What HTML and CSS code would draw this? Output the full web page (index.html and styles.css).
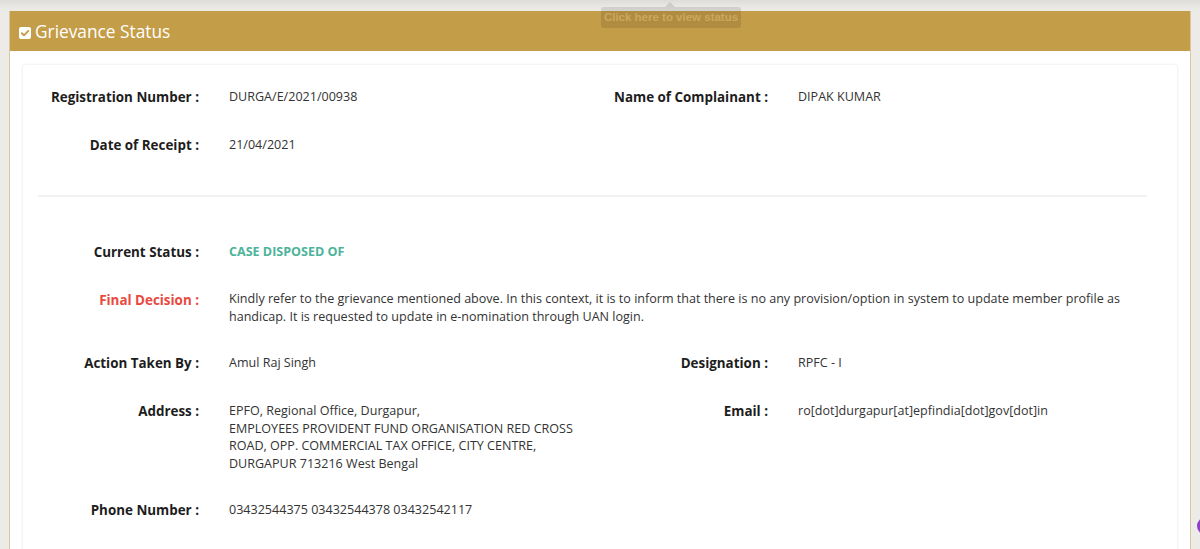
FILE: index.html
```html
<!DOCTYPE html>
<html lang="en">
<head>
<meta charset="utf-8">
<title>Grievance Status</title>
<link rel="stylesheet" href="styles.css">
</head>
<body>
<div class="panel">
  <div class="panel-head">
    <svg class="chk" width="12" height="12" viewBox="0 0 12 12"><rect x="0" y="0" width="12" height="12" rx="2" fill="#fff"/><path d="M2.8 6.2 L5 8.3 L9.3 3.9" fill="none" stroke="#c49d48" stroke-width="1.9" stroke-linecap="round" stroke-linejoin="round"/></svg>
    <span class="title">Grievance Status</span>
  </div>
  <div class="panel-body">
    <div class="card">
      <div class="section">
        <div class="row">
          <div class="lbl">Registration Number :</div>
          <div class="val">DURGA/E/2021/00938</div>
          <div class="lbl">Name of Complainant :</div>
          <div class="val">DIPAK KUMAR</div>
        </div>
        <div class="row">
          <div class="lbl">Date of Receipt :</div>
          <div class="val">21/04/2021</div>
        </div>
      </div>
      <hr class="divider">
      <div class="section">
        <div class="row">
          <div class="lbl">Current Status :</div>
          <div class="val status">CASE DISPOSED OF</div>
        </div>
        <div class="row decision">
          <div class="lbl red">Final Decision :</div>
          <div class="val wide">Kindly refer to the grievance mentioned above. In this context, it is to inform that there is no any provision/option in system to update member profile as handicap. It is requested to update in e-nomination through UAN login.</div>
        </div>
        <div class="row">
          <div class="lbl">Action Taken By :</div>
          <div class="val">Amul Raj Singh</div>
          <div class="lbl">Designation :</div>
          <div class="val">RPFC - I</div>
        </div>
        <div class="row">
          <div class="lbl">Address :</div>
          <div class="val">EPFO, Regional Office, Durgapur,<br>EMPLOYEES PROVIDENT FUND ORGANISATION RED CROSS ROAD, OPP. COMMERCIAL TAX OFFICE, CITY CENTRE, DURGAPUR 713216 West Bengal</div>
          <div class="lbl">Email :</div>
          <div class="val">ro[dot]durgapur[at]epfindia[dot]gov[dot]in</div>
        </div>
        <div class="row">
          <div class="lbl">Phone Number :</div>
          <div class="val">03432544375 03432544378 03432542117</div>
        </div>
      </div>
    </div>
  </div>
</div>
<div class="tooltip">Click here to view status</div>
<div class="chat-bubble"></div>
</body>
</html>
```

FILE: styles.css
```css
html, body {
  margin: 0;
  padding: 0;
}
body {
  background: linear-gradient(to bottom, #dcdcd8 0px, #e8e7e3 6px, #ecebe7 11px, #ecebe7 100%);
  font-family: "Open Sans", "Liberation Sans", sans-serif;
  height: 549px;
  overflow: hidden;
  padding: 11px 0 0 9px;
  box-sizing: border-box;
}
.panel {
  width: 1182px;
  box-sizing: border-box;
  border-left: 1px solid #d9c89e;
  border-right: 1px solid #d9c89e;
  background: #fff;
  min-height: 560px;
}
.panel-head {
  height: 40px;
  background: #c49d48;
  display: flex;
  align-items: center;
  padding-left: 9px;
  color: #fff;
}
.chk {
  margin-right: 4px;
  margin-top: 3px;
}
.title {
  font-size: 17.3px;
  line-height: 20px;
  padding-top: 2px;
}
.panel-body {
  padding: 14px 13px 0 13px;
}
.card {
  background: #fff;
  border-radius: 3px;
  box-shadow: 0 0 3px rgba(0, 0, 0, 0.12);
  padding: 22px 15px 40px 15px;
  min-height: 520px;
}
.section {
  display: flex;
  flex-direction: column;
  gap: 28px;
  margin: 0 -8px;
}
.row {
  display: grid;
  grid-template-columns: 184px 385px 184px 1fr;
  align-items: start;
}
.row.decision {
  margin-bottom: -1px;
}
.lbl {
  text-align: right;
  padding-right: 15px;
  font-weight: 700;
  font-size: 13.4px;
  line-height: 20px;
  color: #1d1d1d;
  white-space: nowrap;
}
.lbl.red {
  color: #e8493f;
}
.val {
  padding-left: 15px;
  font-size: 12.55px;
  line-height: 17.5px;
  padding-top: 1px;
  color: #333;
}
.val.wide {
  grid-column: 2 / 5;
  line-height: 18px;
  padding-top: 0;
}
.val.status {
  color: #4bb39a;
  font-weight: 700;
  padding-top: 1px;
}
.divider {
  border: 0;
  border-top: 2px solid #f1f1f1;
  margin: 40px 15px 45px 0;
}
.tooltip {
  position: absolute;
  left: 601px;
  top: 7px;
  width: 140px;
  height: 21px;
  line-height: 21px;
  text-align: center;
  white-space: nowrap;
  font-family: "Liberation Sans", Arial, sans-serif;
  font-weight: 700;
  font-size: 11.5px;
  color: #fff;
  background: #000;
  border-radius: 3px;
  opacity: 0.1;
}
.tooltip::before {
  content: "";
  position: absolute;
  left: 64px;
  top: -5px;
  border-left: 5px solid transparent;
  border-right: 5px solid transparent;
  border-bottom: 5px solid #000;
}
.chat-bubble {
  position: absolute;
  left: 1197px;
  top: 517px;
  width: 18px;
  height: 18px;
  border-radius: 50%;
  background: #8e3fc8;
}
```
